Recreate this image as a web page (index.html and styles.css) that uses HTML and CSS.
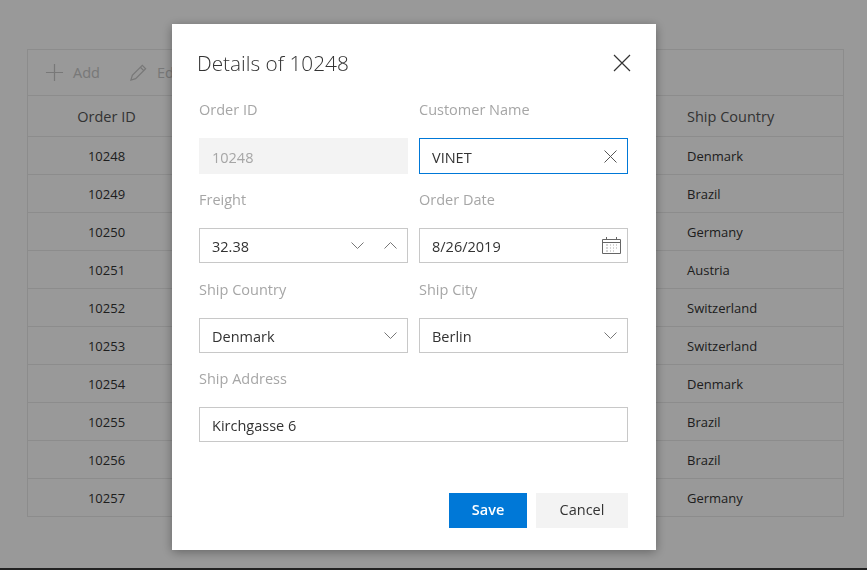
FILE: index.html
```html
<!DOCTYPE html>
<html lang="en">
<head>
    <meta charset="UTF-8">
    <title>Order Details</title>
    <link rel="stylesheet" href="styles.css">
</head>
<body>

<div class="page">
    <div class="grid">
        <div class="toolbar">
            <span class="tool">
                <svg class="tool-icon" viewBox="0 0 20 20"><path d="M10 1v18M1 10h18"/></svg>
                Add
            </span>
            <span class="tool">
                <svg class="tool-icon" viewBox="0 0 20 20"><path d="M2 18l1.5-5L14 2.5 17.500 6 7 16.500zM12 4.500l3.500 3.500"/></svg>
                Edit
            </span>
        </div>
        <div class="row head">
            <div class="cell id">Order ID</div>
            <div class="cell country">Ship Country</div>
        </div>
        <div class="row"><div class="cell id">10248</div><div class="cell country">Denmark</div></div>
        <div class="row"><div class="cell id">10249</div><div class="cell country">Brazil</div></div>
        <div class="row"><div class="cell id">10250</div><div class="cell country">Germany</div></div>
        <div class="row"><div class="cell id">10251</div><div class="cell country">Austria</div></div>
        <div class="row"><div class="cell id">10252</div><div class="cell country">Switzerland</div></div>
        <div class="row"><div class="cell id">10253</div><div class="cell country">Switzerland</div></div>
        <div class="row"><div class="cell id">10254</div><div class="cell country">Denmark</div></div>
        <div class="row"><div class="cell id">10255</div><div class="cell country">Brazil</div></div>
        <div class="row"><div class="cell id">10256</div><div class="cell country">Brazil</div></div>
        <div class="row"><div class="cell id">10257</div><div class="cell country">Germany</div></div>
    </div>
</div>

<div class="overlay">
    <div class="dialog">
        <div class="dialog-header">
            <h2>Details of 10248</h2>
            <svg class="close" viewBox="0 0 18 18"><path d="M1 1l16 16M17 1L1 17"/></svg>
        </div>
        <form class="form">
            <div class="field">
                <label>Order ID</label>
                <div class="box disabled tall"><span class="value">10248</span></div>
            </div>
            <div class="field">
                <label>Customer Name</label>
                <div class="box focused tall">
                    <span class="value">VINET</span>
                    <svg class="clear" viewBox="0 0 13 13"><path d="M.5.5l12 12M12.500.5l-12 12"/></svg>
                </div>
            </div>
            <div class="field">
                <label>Freight</label>
                <div class="box">
                    <span class="value">32.38</span>
                    <svg class="chevron spin" viewBox="0 0 13 7"><path d="M.5.5l6 6 6-6"/></svg>
                    <svg class="chevron" viewBox="0 0 13 7"><path d="M.5 6.500l6-6 6 6"/></svg>
                </div>
            </div>
            <div class="field">
                <label>Order Date</label>
                <div class="box">
                    <span class="value">8/26/2019</span>
                    <svg class="calendar" viewBox="0 0 19 17">
                        <path d="M.5 2.500h18v14H.5zM.5 5.500h18M4.500 0v3M14.500 0v3"/>
                        <path class="dots" d="M4 8h2M8 8h1M11 8h1M14 8h1M4 11h2M8 11h1M11 11h1M14 11h1M4 14h2M8 14h1M11 14h1"/>
                    </svg>
                </div>
            </div>
            <div class="field">
                <label>Ship Country</label>
                <div class="box">
                    <span class="value">Denmark</span>
                    <svg class="chevron" viewBox="0 0 13 7"><path d="M.5.5l6 6 6-6"/></svg>
                </div>
            </div>
            <div class="field">
                <label>Ship City</label>
                <div class="box">
                    <span class="value">Berlin</span>
                    <svg class="chevron" viewBox="0 0 13 7"><path d="M.5.5l6 6 6-6"/></svg>
                </div>
            </div>
            <div class="field wide">
                <label>Ship Address</label>
                <div class="box">
                    <span class="value">Kirchgasse 6</span>
                </div>
            </div>
        </form>
        <div class="dialog-footer">
            <button type="button" class="btn primary">Save</button>
            <button type="button" class="btn">Cancel</button>
        </div>
    </div>
</div>

</body>
</html>
```

FILE: styles.css
```css
body {
    font-family: "Open Sans", "Noto Sans", sans-serif;
    margin: 0;
    padding: 0;
    color: #333;
    background-color: #fff;
}
.page {
    height: 519px;
    padding: 49px 23px 0 27px;
    background-color: #fff;
    border-bottom: 2px solid #222;
}
.grid {
    border: 1px solid #eaeaea;
    font-size: 13px;
}
.toolbar {
    height: 45px;
    display: flex;
    align-items: center;
    gap: 29px;
    padding-left: 17px;
    border-bottom: 1px solid #eaeaea;
    color: #c8c8c8;
    font-size: 14.500px;
}
.tool {
    display: flex;
    align-items: center;
    gap: 9px;
}
.tool-icon {
    width: 19px;
    height: 19px;
    fill: none;
    stroke: #c8c8c8;
    stroke-width: 1.3;
}
.row {
    display: flex;
    justify-content: space-between;
    box-sizing: border-box;
    padding-top: 1px;
    height: 38px;
    align-items: center;
    border-bottom: 1px solid #eaeaea;
}
.row:last-child {
    height: 37px;
    border-bottom: 0;
}
.head {
    height: 41px;
    padding-top: 0;
    font-size: 14.500px;
    color: #555;
}
.cell.id {
    width: 157px;
    text-align: center;
}
.cell.country {
    width: 156px;
}
.overlay {
    position: fixed;
    top: 0;
    left: 0;
    right: 0;
    height: 568px;
    background-color: rgba(0, 0, 0, 0.4);
}
.dialog {
    position: absolute;
    top: 24px;
    left: 172px;
    width: 484px;
    height: 526px;
    box-sizing: border-box;
    padding: 0 28px 22px 27px;
    display: flex;
    flex-direction: column;
    background-color: #fff;
    box-shadow: 0 2px 10px rgba(0, 0, 0, 0.35);
}
.dialog-header {
    display: flex;
    justify-content: space-between;
    align-items: center;
    height: 76px;
    box-sizing: border-box;
    padding-top: 2px;
    margin-left: -2px;
    margin-right: -3px;
}
.dialog-header h2 {
    margin: 0;
    font-size: 20.800px;
    font-weight: 300;
    color: #333;
}
.close {
    width: 18px;
    height: 18px;
    fill: none;
    stroke: #333;
    stroke-width: 1.2;
}
.form {
    display: grid;
    grid-template-columns: 209px 209px;
    column-gap: 11px;
    row-gap: 16.800px;
    flex: 1;
    align-content: start;
}
.field label {
    display: block;
    height: 20px;
    line-height: 20.600px;
    margin-bottom: 18px;
    font-size: 14.500px;
    color: #a6a6a6;
}
.field.wide {
    grid-column: 1 / 3;
}
.box {
    height: 35px;
    box-sizing: border-box;
    display: flex;
    align-items: center;
    padding: 0 10px 0 12px;
    border: 1px solid #c8c8c8;
    font-size: 14.500px;
    color: #333;
}
.box.tall {
    height: 36px;
    margin-bottom: -1px;
}
.box.disabled {
    border-color: #f3f3f3;
    background-color: #f3f3f3;
    color: #a6a6a6;
}
.box.focused {
    border-color: #0078d7;
}
.value {
    flex: 1;
    padding-top: 2px;
}
.clear {
    width: 13px;
    height: 13px;
    fill: none;
    stroke: #555;
}
.chevron {
    width: 13px;
    height: 7px;
    fill: none;
    stroke: #777;
}
.chevron.spin {
    margin-right: 20px;
}
.calendar {
    width: 19px;
    height: 17px;
    margin-right: -4px;
    fill: none;
    stroke: #666;
}
.dots {
    stroke: #aaa;
}
.dialog-footer {
    display: flex;
    justify-content: flex-end;
    gap: 9px;
}
.btn {
    height: 35px;
    width: 92px;
    border: 0;
    padding: 0 0 2px;
    font-family: inherit;
    font-size: 14.500px;
    color: #333;
    background-color: #f3f3f3;
}
.btn.primary {
    width: 78px;
    font-weight: 600;
    color: #fff;
    background-color: #0078d7;
}
```
